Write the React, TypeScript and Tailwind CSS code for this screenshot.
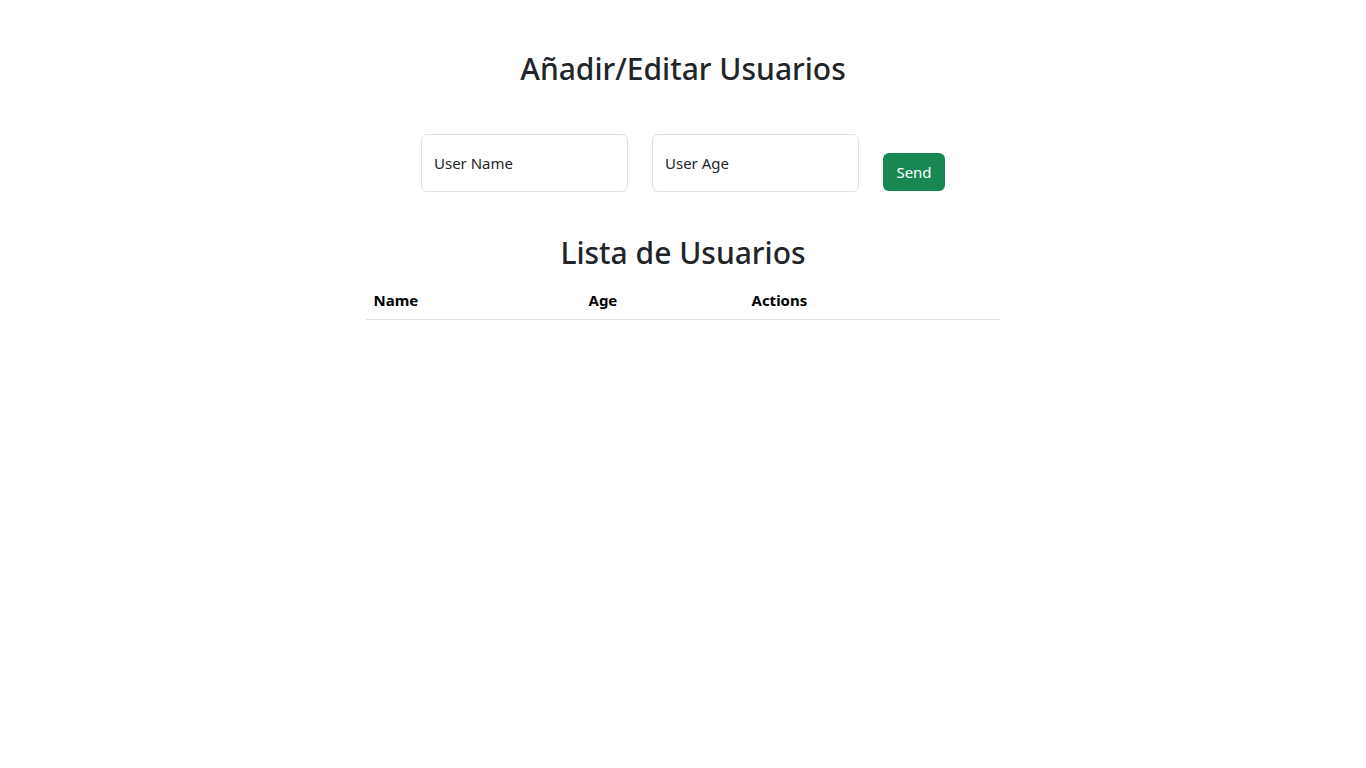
import React from "react";

export default function App() {
  return (
    <div
      className="min-h-screen bg-white text-[#212529]"
      style={{ fontFamily: '"Noto Sans", "Open Sans", sans-serif' }}
    >
      <div className="pt-[50px] flex flex-col items-center">
        <h2 className="text-[30px] leading-[38px] font-medium">Añadir/Editar Usuarios</h2>
        <div className="mt-[46px] flex items-end gap-6">
          <div className="w-[207px] h-[58px] border border-[#dee2e6] rounded-md flex items-center px-3 text-[15px] text-[#212529]">
            User Name
          </div>
          <div className="w-[207px] h-[58px] border border-[#dee2e6] rounded-md flex items-center px-3 text-[15px] text-[#212529]">
            User Age
          </div>
          <button className="mb-[1px] h-[38px] w-[62px] rounded-md bg-[#198754] text-white text-[15px]">
            Send
          </button>
        </div>
        <h2 className="mt-[42px] text-[30px] leading-[38px] font-medium">Lista de Usuarios</h2>
        <table className="mt-[8px] w-[635px] text-left">
          <thead>
            <tr className="border-b border-[#dee2e6]">
              <th className="w-[215px] px-2 pt-2 pb-[7px] text-[15px] leading-6 font-bold text-black">Name</th>
              <th className="w-[163px] px-2 pt-2 pb-[7px] text-[15px] leading-6 font-bold text-black">Age</th>
              <th className="px-2 pt-2 pb-[7px] text-[15px] leading-6 font-bold text-black">Actions</th>
            </tr>
          </thead>
          <tbody></tbody>
        </table>
      </div>
    </div>
  );
}
